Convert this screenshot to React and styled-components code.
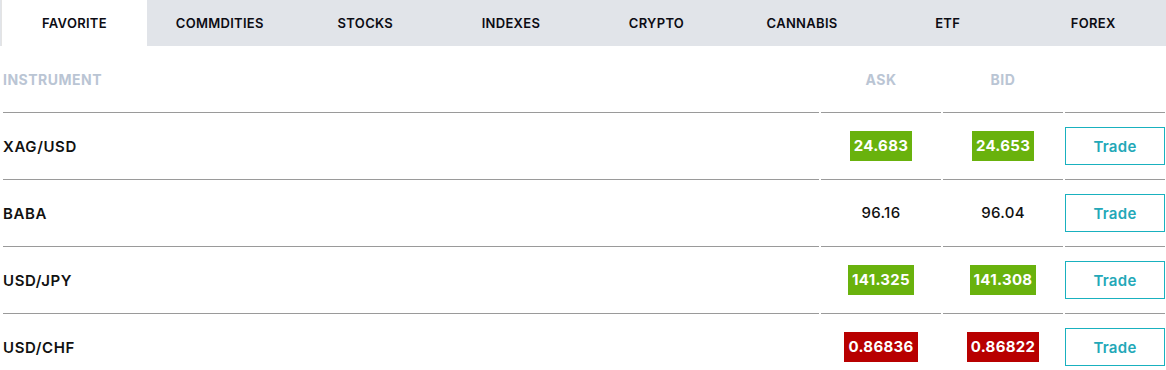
import React, { useState } from 'react';
import styled, { createGlobalStyle } from 'styled-components';

const GlobalStyle = createGlobalStyle`
  body {
    margin: 0;
    background: #fff;
    font-family: Inter, "Open Sans", sans-serif;
  }
`;

const Wrapper = styled.div`
  width: 1166px;
`;

const TabBar = styled.div`
  display: grid;
  grid-template-columns: 147px repeat(7, 1fr);
  height: 46px;
  background: #e1e4e9;
`;

const Tab = styled.button`
  border: none;
  border-left: ${(p) => (p.active ? '1px solid #e4e4e4' : 'none')};
  margin-left: ${(p) => (p.active ? '1px' : '0')};
  background: ${(p) => (p.active ? '#fff' : 'transparent')};
  font-family: inherit;
  font-size: 13px;
  font-weight: 600;
  letter-spacing: 0.3px;
  color: #0c0c14;
  text-transform: uppercase;
  cursor: pointer;
  padding: 0;
  padding-bottom: 1px;
`;

const Table = styled.div`
  padding: 0 1px 0 3px;
`;

const Row = styled.div`
  display: grid;
  grid-template-columns: 1fr 120px 120px 100px;
  column-gap: 2px;
`;

const Cell = styled.div`
  height: 66px;
  border-bottom: ${(p) => (p.last ? 'none' : '1px solid #9a9a9a')};
  display: flex;
  align-items: center;
  justify-content: ${(p) => (p.left ? 'flex-start' : 'center')};
`;

const HeadText = styled.span`
  font-size: 14px;
  font-weight: 700;
  letter-spacing: 0.5px;
  color: #bac5d4;
`;

const Name = styled.span`
  font-size: 15px;
  font-weight: 600;
  color: #111;
  letter-spacing: 0.6px;
`;

const Price = styled.span`
  font-size: 15px;
  font-weight: ${(p) => (p.tone ? 700 : 500)};
  letter-spacing: 0.3px;
  color: ${(p) => (p.tone ? '#fff' : '#111')};
  background: ${(p) => (p.tone === 'up' ? '#69b20d' : p.tone === 'down' ? '#b80000' : 'transparent')};
  line-height: 30px;
  padding: 0 ${(p) => (p.tone ? '4px' : '0')};
`;

const TradeButton = styled.button`
  width: 100px;
  height: 38px;
  border: 1px solid #19b1bf;
  background: #fff;
  color: #23a8b8;
  font-family: inherit;
  font-size: 15px;
  font-weight: 600;
  letter-spacing: 0.3px;
  cursor: pointer;
`;

const tabs = ['Favorite', 'Commdities', 'Stocks', 'Indexes', 'Crypto', 'Cannabis', 'ETF', 'Forex'];

const rows = [
  { name: 'XAG/USD', ask: '24.683', bid: '24.653', tone: 'up' },
  { name: 'BABA', ask: '96.16', bid: '96.04', tone: null },
  { name: 'USD/JPY', ask: '141.325', bid: '141.308', tone: 'up' },
  { name: 'USD/CHF', ask: '0.86836', bid: '0.86822', tone: 'down' },
];

function App() {
  const [active, setActive] = useState('Favorite');

  return (
    <Wrapper>
      <GlobalStyle />
      <TabBar>
        {tabs.map((t) => (
          <Tab key={t} active={t === active} onClick={() => setActive(t)}>
            {t}
          </Tab>
        ))}
      </TabBar>
      <Table>
        <Row>
          <Cell left><HeadText>INSTRUMENT</HeadText></Cell>
          <Cell><HeadText>ASK</HeadText></Cell>
          <Cell><HeadText>BID</HeadText></Cell>
          <Cell />
        </Row>
        {rows.map((r, i) => {
          const last = i === rows.length - 1;
          return (
            <Row key={r.name}>
              <Cell left last={last}><Name>{r.name}</Name></Cell>
              <Cell last={last}><Price tone={r.tone}>{r.ask}</Price></Cell>
              <Cell last={last}><Price tone={r.tone}>{r.bid}</Price></Cell>
              <Cell last={last}><TradeButton>Trade</TradeButton></Cell>
            </Row>
          );
        })}
      </Table>
    </Wrapper>
  );
}

export default App;
